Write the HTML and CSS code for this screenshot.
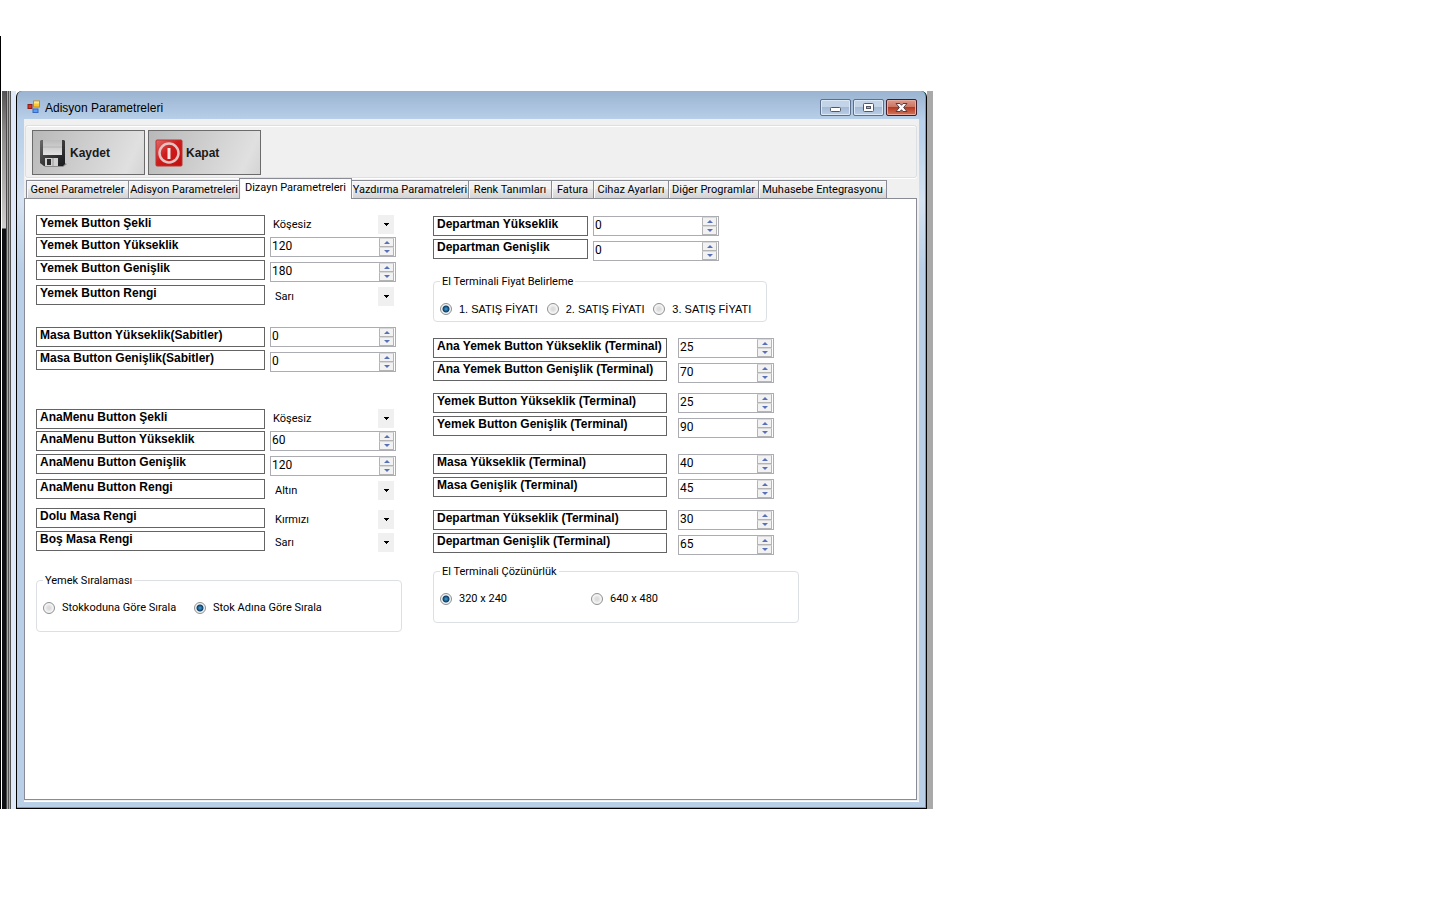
FILE: index.html
```html
<!DOCTYPE html>
<html lang="tr">
<head>
<meta charset="utf-8">
<title>Adisyon Parametreleri</title>
<link rel="stylesheet" href="styles.css">
</head>
<body>
<div class="desktop">
  <div class="edge"></div>
  <div class="backdrop"></div>
  <main class="window">
    <header class="titlebar">
      <svg class="app-icon" viewBox="0 0 14 14" width="14" height="14" aria-hidden="true">
        <rect x="6.5" y="1" width="6" height="6" fill="#f9c832" stroke="#c88a10"/>
        <rect x="7" y="1.500" width="5" height="2" fill="#ffe88a"/>
        <rect x="1" y="4.500" width="4" height="4" fill="#d8352a" stroke="#8f1c14"/>
        <rect x="6" y="9" width="5" height="3.500" fill="#5aa0f5" stroke="#3668c0"/>
      </svg>
      <h1 class="title">Adisyon Parametreleri</h1>
      <div class="caption">
        <button class="cap" aria-label="Simge durumuna küçült"><svg viewBox="0 0 29 15" width="29" height="15"><rect x="9.500" y="7.500" width="10" height="4" rx="1" fill="#fff" stroke="#535666"/></svg></button>
        <button class="cap" aria-label="Ekranı kapla"><svg viewBox="0 0 29 15" width="29" height="15"><rect x="9.500" y="3.500" width="10" height="8" rx="1" fill="#fff" stroke="#535666"/><rect x="12.500" y="6.500" width="4" height="2" fill="#9fb5cf" stroke="#535666"/></svg></button>
        <button class="cap cap-close" aria-label="Pencereyi kapat"><svg viewBox="0 0 29 15" width="29" height="15"><path d="M9 3.500h4l1.500 1.800 1.500-1.800h4l-3.400 4 3.400 4h-4l-1.500-1.800-1.500 1.800H9l3.400-4z" fill="#fff" stroke="#5b3b3f"/></svg></button>
      </div>
    </header>
    <div class="client">
      <div class="toolbar">
        <button class="tool">
          <svg viewBox="0 0 28 30" width="28" height="30" aria-hidden="true">
            <defs><linearGradient id="fd" x1="0" y1="0" x2="1" y2="1"><stop offset="0" stop-color="#6a6a6a"/><stop offset=".5" stop-color="#3a3a3a"/><stop offset="1" stop-color="#17191d"/></linearGradient>
            <linearGradient id="fl" x1="0" y1="0" x2="0" y2="1"><stop offset="0" stop-color="#bbb"/><stop offset="1" stop-color="#e2e2e2"/></linearGradient></defs>
            <path d="M4 27l22-2 2 1-4 3H6z" fill="#8b8b8b"/>
            <path d="M2 2h23l1 1v23l-2 2H5l-4-3V3z" fill="url(#fd)"/>
            <rect x="4" y="2" width="19" height="15" fill="url(#fl)"/>
            <path d="M4 9h19" stroke="#b4b4b4"/>
            <rect x="6" y="20" width="13" height="8" fill="#d0d0d0"/>
            <rect x="8" y="21" width="4" height="6" fill="#2c2c2c"/>
            <path d="M14 20v8" stroke="#999"/>
          </svg>
          <span>Kaydet</span>
        </button>
        <button class="tool">
          <svg viewBox="0 0 28 30" width="28" height="30" aria-hidden="true">
            <defs><linearGradient id="rd" x1="0" y1="0" x2="1" y2="1"><stop offset="0" stop-color="#e06a68"/><stop offset=".45" stop-color="#cf1c1c"/><stop offset="1" stop-color="#c00d0d"/></linearGradient></defs>
            <rect x="1" y="2" width="26" height="26" rx="1" fill="url(#rd)" stroke="#b33"/>
            <circle cx="14" cy="15" r="9.500" fill="none" stroke="#e3c4c2" stroke-width="2.500"/>
            <path d="M14 10v11" stroke="#f4e4e4" stroke-width="3"/>
          </svg>
          <span>Kapat</span>
        </button>
      </div>
      <div class="tabs" role="tablist">
        <button class="tab" role="tab">Genel Parametreler</button>
        <button class="tab" role="tab">Adisyon Parametreleri</button>
        <button class="tab active" role="tab" aria-selected="true">Dizayn Parametreleri</button>
        <button class="tab" role="tab">Yazdırma Paramatreleri</button>
        <button class="tab" role="tab">Renk Tanımları</button>
        <button class="tab" role="tab">Fatura</button>
        <button class="tab" role="tab">Cihaz Ayarları</button>
        <button class="tab" role="tab">Diğer Programlar</button>
        <button class="tab" role="tab">Muhasebe Entegrasyonu</button>
      </div>
      <form class="page">
        <div class="col col-left">
          <div class="row tight"><label for="a1">Yemek Button Şekli</label><select id="a1"><option>Köşesiz</option></select></div>
          <div class="row"><label for="a2">Yemek Button Yükseklik</label><span class="num"><input id="a2" value="120"><span class="spin"><button type="button" aria-label="Artır"></button><button type="button" aria-label="Azalt"></button></span></span></div>
          <div class="row loose low"><label for="a3">Yemek Button Genişlik</label><span class="num"><input id="a3" value="180"><span class="spin"><button type="button" aria-label="Artır"></button><button type="button" aria-label="Azalt"></button></span></span></div>
          <div class="row section low"><label for="a4">Yemek Button Rengi</label><select id="a4" class="color"><option>Sarı</option></select></div>
          <div class="row"><label for="a5">Masa Button Yükseklik(Sabitler)</label><span class="num"><input id="a5" value="0"><span class="spin"><button type="button" aria-label="Artır"></button><button type="button" aria-label="Azalt"></button></span></span></div>
          <div class="row block low"><label for="a6">Masa Button Genişlik(Sabitler)</label><span class="num"><input id="a6" value="0"><span class="spin"><button type="button" aria-label="Artır"></button><button type="button" aria-label="Azalt"></button></span></span></div>
          <div class="row tight"><label for="a7">AnaMenu Button Şekli</label><select id="a7"><option>Köşesiz</option></select></div>
          <div class="row"><label for="a8">AnaMenu Button Yükseklik</label><span class="num"><input id="a8" value="60"><span class="spin"><button type="button" aria-label="Artır"></button><button type="button" aria-label="Azalt"></button></span></span></div>
          <div class="row loose low"><label for="a9">AnaMenu Button Genişlik</label><span class="num"><input id="a9" value="120"><span class="spin"><button type="button" aria-label="Artır"></button><button type="button" aria-label="Azalt"></button></span></span></div>
          <div class="row looser low"><label for="a10">AnaMenu Button Rengi</label><select id="a10" class="color"><option>Altın</option></select></div>
          <div class="row low"><label for="a11">Dolu Masa Rengi</label><select id="a11" class="color"><option>Kırmızı</option></select></div>
          <div class="row before-group low"><label for="a12">Boş Masa Rengi</label><select id="a12" class="color"><option>Sarı</option></select></div>
          <fieldset class="group">
            <legend>Yemek Sıralaması</legend>
            <label class="opt wide"><input type="radio" name="sort">Stokkoduna Göre Sırala</label>
            <label class="opt"><input type="radio" name="sort" checked>Stok Adına Göre Sırala</label>
          </fieldset>
        </div>
        <div class="col col-right">
          <div class="row dept"><label for="b1">Departman Yükseklik</label><span class="num"><input id="b1" value="0"><span class="spin"><button type="button" aria-label="Artır"></button><button type="button" aria-label="Azalt"></button></span></span></div>
          <div class="row dept low section-sm"><label for="b2">Departman Genişlik</label><span class="num"><input id="b2" value="0"><span class="spin"><button type="button" aria-label="Artır"></button><button type="button" aria-label="Azalt"></button></span></span></div>
          <fieldset class="group price">
            <legend>El Terminali Fiyat Belirleme</legend>
            <label class="opt"><input type="radio" name="price" checked>1. SATIŞ FİYATI</label>
            <label class="opt"><input type="radio" name="price">2. SATIŞ FİYATI</label>
            <label class="opt"><input type="radio" name="price">3. SATIŞ FİYATI</label>
          </fieldset>
          <div class="row term"><label for="c1">Ana Yemek Button Yükseklik (Terminal)</label><span class="num"><input id="c1" value="25"><span class="spin"><button type="button" aria-label="Artır"></button><button type="button" aria-label="Azalt"></button></span></span></div>
          <div class="row term low pair"><label for="c2">Ana Yemek Button Genişlik (Terminal)</label><span class="num"><input id="c2" value="70"><span class="spin"><button type="button" aria-label="Artır"></button><button type="button" aria-label="Azalt"></button></span></span></div>
          <div class="row term"><label for="c3">Yemek Button Yükseklik (Terminal)</label><span class="num"><input id="c3" value="25"><span class="spin"><button type="button" aria-label="Artır"></button><button type="button" aria-label="Azalt"></button></span></span></div>
          <div class="row term low pair-lg"><label for="c4">Yemek Button Genişlik (Terminal)</label><span class="num"><input id="c4" value="90"><span class="spin"><button type="button" aria-label="Artır"></button><button type="button" aria-label="Azalt"></button></span></span></div>
          <div class="row term"><label for="c5">Masa Yükseklik (Terminal)</label><span class="num"><input id="c5" value="40"><span class="spin"><button type="button" aria-label="Artır"></button><button type="button" aria-label="Azalt"></button></span></span></div>
          <div class="row term low section-sm"><label for="c6">Masa Genişlik (Terminal)</label><span class="num"><input id="c6" value="45"><span class="spin"><button type="button" aria-label="Artır"></button><button type="button" aria-label="Azalt"></button></span></span></div>
          <div class="row term"><label for="c7">Departman Yükseklik (Terminal)</label><span class="num"><input id="c7" value="30"><span class="spin"><button type="button" aria-label="Artır"></button><button type="button" aria-label="Azalt"></button></span></span></div>
          <div class="row term low looser"><label for="c8">Departman Genişlik (Terminal)</label><span class="num"><input id="c8" value="65"><span class="spin"><button type="button" aria-label="Artır"></button><button type="button" aria-label="Azalt"></button></span></span></div>
          <fieldset class="group">
            <legend>El Terminali Çözünürlük</legend>
            <label class="opt wide"><input type="radio" name="res" checked>320 x 240</label>
            <label class="opt wide"><input type="radio" name="res">640 x 480</label>
          </fieldset>
        </div>
      </form>
    </div>
  </main>
  <div class="shade"></div>
</div>
</body>
</html>
```
FILE: styles.css
```css
* { box-sizing: border-box; }
body {
  margin: 0;
  background: #fff;
  color: #000;
  font: 11px/16px Roboto, "Liberation Sans", Arial, sans-serif;
}
button, input, select { font: inherit; color: inherit; margin: 0; padding: 0; }

.desktop {
  display: flex;
  min-height: calc(100vh - 91px);
  padding-top: 36px;
  margin-right: 507px;
}
.edge { flex: none; width: 1px; background: #000; }
.backdrop {
  flex: none;
  width: 15px;
  margin-top: 55px;
  background:
    linear-gradient(90deg, transparent 0 5px, #4a4a4a 5px 6px, #aaa 6px 7px, #555 7px 8px, #aaa 8px 9px, #555 9px 10px, #dfe9f7 10px 15px),
    linear-gradient(90deg, #fff 0 1px, transparent 1px),
    linear-gradient(180deg, #555 0, #8a8a8a 40px, #cfcfcf 137px, #0e1014 138px);
}
.window {
  flex: 1;
  min-width: 0;
  display: flex;
  flex-direction: column;
  margin-top: 55px;
  padding: 0 7px 6px 7px;
  border: solid #000;
  border-width: 0 1px 1px 1px;
  border-radius: 6px 6px 0 0;
  background: linear-gradient(180deg, #9ab3d0 0, #b9d1ea 30px, #b9d1ea 45px, #d6e3f2 110px, #b9cfe7 180px);
  box-shadow: inset -1px -1px 0 #35b9d6;
}
.shade { flex: none; width: 6px; margin-top: 55px; background: #a9a9a9; }
.titlebar { display: flex; height: 28px; padding: 8px 2px 0 3px; }
.app-icon { margin-top: 1px; }
.title { margin: 0 auto 0 4px; font: 400 12px/18px "Liberation Sans", Arial, sans-serif; }
.caption { display: flex; gap: 2px; }
.cap {
  width: 31px;
  height: 17px;
  border: 1px solid #5c6f8c;
  border-radius: 2px;
  background: linear-gradient(#c3d4e8 0 45%, #a3b9d5 50%, #bad0e8);
  box-shadow: inset 0 0 0 1px #dce8f5;
}
.cap svg { display: block; }
.cap-close {
  border-color: #431e28;
  background: linear-gradient(#dc9a8c 0, #cd7563 45%, #b53a22 50%, #d0775a);
  box-shadow: inset 0 0 0 1px #e5ac9f;
}

.client {
  flex: 1;
  display: flex;
  flex-direction: column;
  background: #f0f0f0;
  padding: 6px 2px 1px 0;
  border-bottom: 1px solid #fff;
}
.toolbar {
  display: flex;
  gap: 3px;
  height: 53px;
  margin-left: 1px;
  padding: 4px 6px;
  border: 1px solid #dcdfe4;
  border-radius: 3px;
  box-shadow: inset 0 1px 0 #fff, 0 1px 0 #fff;
}
.tool {
  display: flex;
  align-items: center;
  gap: 3px;
  width: 113px;
  height: 45px;
  padding-left: 6px;
  border: 1px solid #6b6b6b;
  background: linear-gradient(115deg, #b8b8b8, #e0e0e0 85%, #d4d4d4);
  color: #1a1a1a;
  font: 700 12px/16px "Liberation Sans", Arial, sans-serif;
}
.tabs {
  display: grid;
  grid-template-columns: 102px 111px 112px 117px 83px 42px 75px 90px 128px;
  align-items: end;
  height: 20px;
  padding-left: 2px;
}
.tab {
  height: 18px;
  border: 1px solid #898c95;
  border-bottom: 0;
  margin-right: -1px;
  background: linear-gradient(#f3f3f3 0 45%, #e8e8e8 50%, #d3d3d3);
  box-shadow: inset 1px 1px 0 #fafafa;
  line-height: 18px;
  white-space: nowrap;
}
.tab.active {
  position: relative;
  z-index: 1;
  height: 21px;
  margin-bottom: -1px;
  padding-bottom: 2px;
  background: #fff;
}
.page {
  flex: 1;
  display: flex;
  align-items: flex-start;
  gap: 31px;
  padding: 16px 11px;
  border: 1px solid #898c95;
  background: #fff;
}
.col { width: 366px; }
.col-right { padding-top: 1px; }

.row { display: flex; gap: 5px; height: 20px; margin-bottom: 3px; }
.row label {
  width: 229px;
  height: 20px;
  padding-left: 3px;
  border: 1px solid #646464;
  font: 700 12px/14px "Liberation Sans", Arial, sans-serif;
  white-space: nowrap;
}
.dept label { width: 155px; }
.term { gap: 11px; }
.term label { width: 234px; }
.tight { margin-bottom: 2px; }
.loose { margin-bottom: 5px; }
.looser { margin-bottom: 9px; }
.section { margin-bottom: 22px; }
.before-group { margin-bottom: 20px; }
.section-sm { margin-bottom: 13px; }
.pair { margin-bottom: 12px; }
.pair-lg { margin-bottom: 18px; }
.block { margin-bottom: 39px; }

.num {
  display: flex;
  width: 126px;
  height: 20px;
  border: 1px solid #abadb3;
  background: #fff;
}
.term .num { width: 96px; }
.low .num, .low select { margin-top: 2px; }
.num input {
  flex: 1;
  min-width: 0;
  height: 16px;
  padding-left: 1px;
  border: 0;
  background: transparent;
  font-size: 12px;
  outline: 0;
}
.spin { display: flex; flex-direction: column; width: 15px; height: 18px; margin-right: 1px; }
.spin button {
  display: grid;
  place-items: center;
  height: 9px;
  border: 1px solid #b4b4b4;
  border-top-color: #d8d8d8;
  background: #f2f2f2;
}
.spin button::before {
  content: "";
  border: 3px solid transparent;
  border-top-width: 0;
  border-bottom: 3px solid #5870b8;
}
.spin button + button::before { border-bottom-width: 0; border-top: 3px solid #5870b8; }

select {
  appearance: none;
  width: 124px;
  height: 19px;
  padding-left: 3px;
  border: 0;
  border-radius: 0;
  background:
    linear-gradient(#000, #000) right 5px top 8px / 5px 1px no-repeat,
    linear-gradient(#000, #000) right 6px top 9px / 3px 1px no-repeat,
    linear-gradient(#000, #000) right 7px top 10px / 1px 1px no-repeat,
    linear-gradient(#f0f0f0, #f0f0f0) right / 16px 100% no-repeat;
}
select.color { padding-left: 5px; }

.group {
  display: flex;
  min-width: 0;
  height: 61px;
  margin: 0;
  padding: 11px 6px 0 6px;
  border: 1px solid #dcdfe4;
  border-radius: 4px;
}
.group legend { padding: 2px 2px 0; }
.opt { display: flex; align-items: flex-start; gap: 7px; white-space: nowrap; }
.opt input {
  appearance: none;
  width: 12px;
  height: 12px;
  margin-top: 2px;
  border: 1px solid #8e8f8f;
  border-radius: 50%;
  background: radial-gradient(circle, #dcdcdc 0 20%, #f4f4f4 60%);
  box-shadow: inset 0 0 0 1px #f4f4f4;
}
.opt input:checked { background: radial-gradient(circle at 50% 50%, #3fa4d8 0, #0f3d66 3px, #e8eef2 4px); }
.wide { width: 151px; }
.price { width: 334px; height: 50px; margin-bottom: 16px; }
.price .opt { width: 109px; font-family: "Liberation Sans", Arial, sans-serif; }
```
